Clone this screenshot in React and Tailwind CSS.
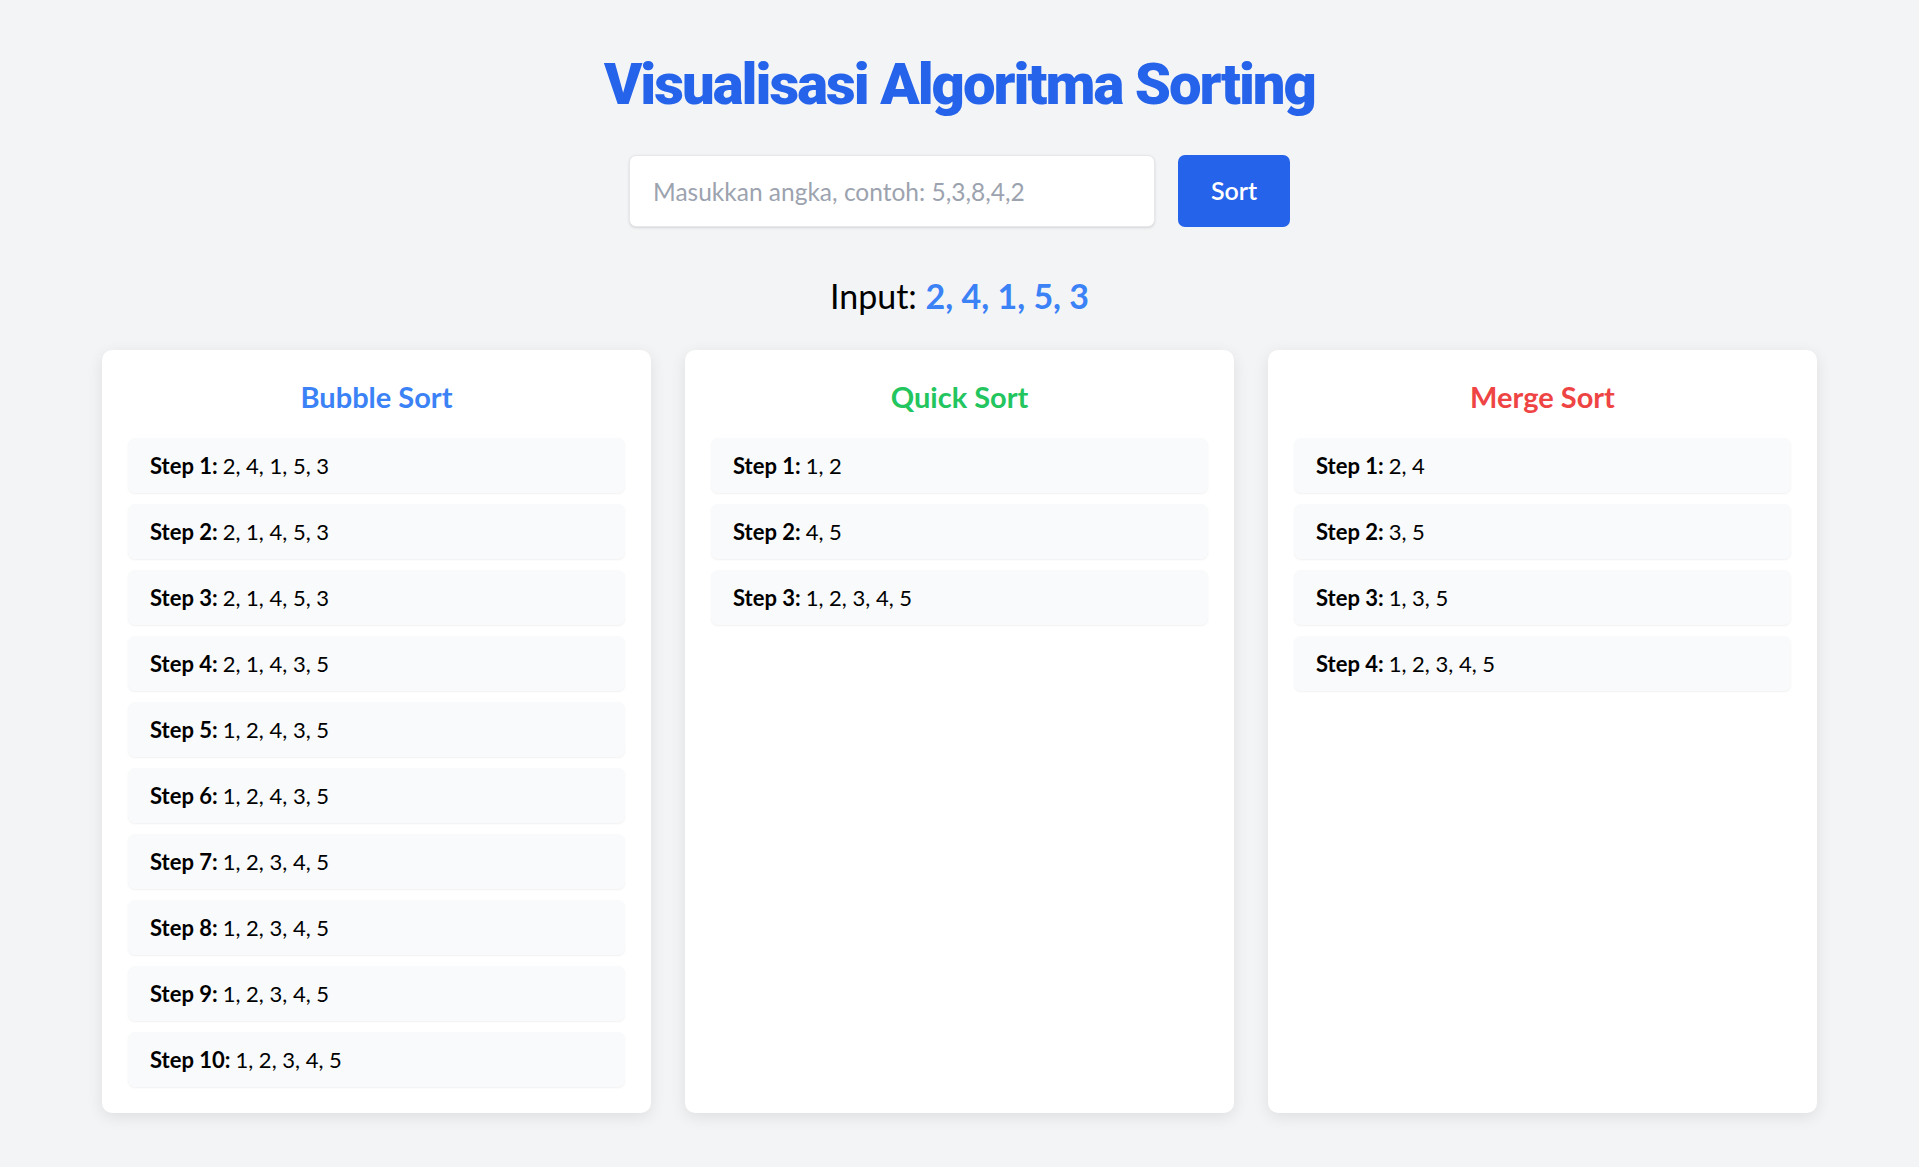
import React from "react";

const bubble = [
  "2, 4, 1, 5, 3",
  "2, 1, 4, 5, 3",
  "2, 1, 4, 5, 3",
  "2, 1, 4, 3, 5",
  "1, 2, 4, 3, 5",
  "1, 2, 4, 3, 5",
  "1, 2, 3, 4, 5",
  "1, 2, 3, 4, 5",
  "1, 2, 3, 4, 5",
  "1, 2, 3, 4, 5",
];
const quick = ["1, 2", "4, 5", "1, 2, 3, 4, 5"];
const merge = ["2, 4", "3, 5", "1, 3, 5", "1, 2, 3, 4, 5"];

function SortCard({ title, color, steps }) {
  return (
    <div className="bg-white rounded-[10px] shadow-[0_4px_16px_rgba(0,0,0,0.09)] p-[26px]">
      <h2 className={`text-center text-[29px] leading-[42px] font-bold ${color}`}>{title}</h2>
      <div className="mt-[20px] flex flex-col gap-[11px]">
        {steps.map((s, i) => (
          <div
            key={i}
            className="h-[55px] flex items-center px-[22px] bg-[#f9fafb] rounded-[7px] shadow-[0_1px_2px_rgba(0,0,0,0.06)] text-[22px] text-black"
          >
            <span className="font-bold mr-[5px]">Step {i + 1}:</span>
            {s}
          </div>
        ))}
      </div>
    </div>
  );
}

export default function App() {
  return (
    <div className="min-h-screen bg-[#f3f4f6] pt-[48px] font-['Lato',sans-serif] [font-variant-ligatures:none]">
      <h1 className="text-center text-[58px] leading-[72px] font-black tracking-[-2px] text-[#2563eb] font-['Roboto',sans-serif]">
        Visualisasi Algoritma Sorting
      </h1>

      <div className="mt-[35px] flex justify-center gap-[23px]">
        <input
          type="text"
          placeholder="Masukkan angka, contoh: 5,3,8,4,2"
          className="w-[526px] h-[72px] px-[23px] text-[24.5px] bg-white border border-[#e5e7eb] rounded-[7px] shadow-sm placeholder:text-[#9ca3af] outline-none"
        />
        <button className="w-[112px] h-[72px] bg-[#2563eb] text-white text-[25px] font-semibold rounded-[7px]">
          Sort
        </button>
      </div>

      <p className="mt-[49px] text-center text-[34px] leading-[40px] text-black">
        Input: <span className="font-bold text-[#3b82f6]">2, 4, 1, 5, 3</span>
      </p>

      <div className="mt-[34px] w-[1715px] mx-auto grid grid-cols-3 gap-[34px]">
        <SortCard title="Bubble Sort" color="text-[#3b82f6]" steps={bubble} />
        <SortCard title="Quick Sort" color="text-[#22c55e]" steps={quick} />
        <SortCard title="Merge Sort" color="text-[#ef4444]" steps={merge} />
      </div>
    </div>
  );
}
